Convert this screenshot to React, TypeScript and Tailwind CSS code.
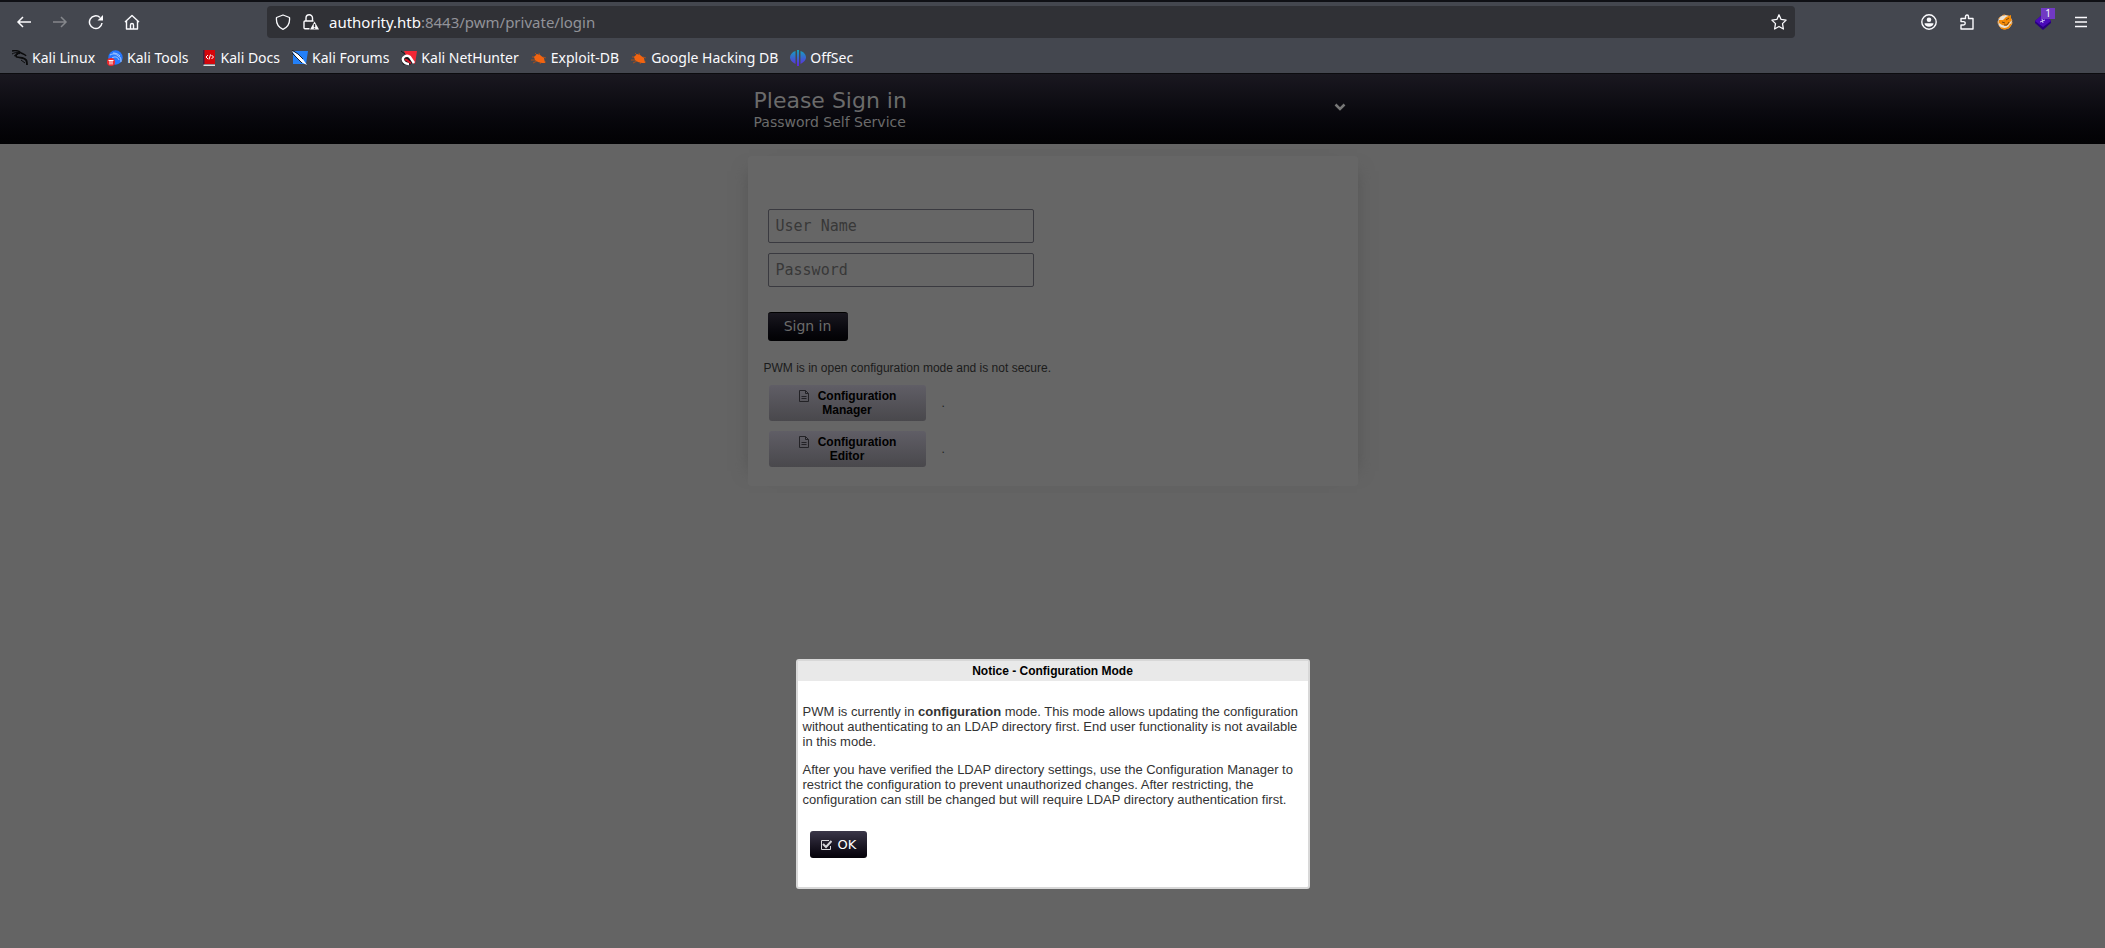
import type { ReactNode } from "react";

type Bookmark = { label: string; icon: ReactNode };

const bug = (
  <svg viewBox="0 0 16 16" className="size-4">
    <path
      d="M1 7h4M0 10h5M2 13l4-2M4 3l3 3M8 3l1 3M12 7l3 1M13 12l2 0M9 14l1-2"
      stroke="#a8501c"
      strokeWidth="1"
    />
    <path d="M3 7l3-3 3 1 4 3 1 5-3 0-4-1-3-2z" fill="#f26411" />
  </svg>
);

const bookmarks: Bookmark[] = [
  {
    label: "Kali Linux",
    icon: (
      <svg viewBox="0 0 16 16" className="size-4" fill="none" stroke="#0b0b0c">
        <path d="M0 1c4-1 7 0 9 2 2 1 4 1 5 3" strokeWidth="1.5" />
        <path d="M8 3c-4 0-5 3-3 4 3 1 7 0 9 3 1 1 1 3 1 5" strokeWidth="1.8" />
        <path d="M0 4c2-1 4-2 7-1M2 6l4-2M9 10l4 3" />
      </svg>
    ),
  },
  {
    label: "Kali Tools",
    icon: (
      <svg viewBox="0 0 16 16" className="size-4">
        <circle cx="8.5" cy="7.5" r="7.2" fill="#2777ff" />
        <path d="M3 5c4-2 6-1 8 1 3 1 3 3 3 6M5 8c3-2 6-1 7 2M6 3c3 0 5 1 7 3" stroke="#a9ccff" fill="none" />
        <circle cx="4" cy="12" r="4" fill="#f0282d" />
        <path d="M1.5 10.5h5M3 10.5v4M5 10.5v4" stroke="#fff" />
      </svg>
    ),
  },
  {
    label: "Kali Docs",
    icon: (
      <svg viewBox="0 0 16 16" className="size-4">
        <path d="M3 0h11v14H3z" fill="#d3060b" />
        <path d="M2 0h1.5v15H2z" fill="#3b2142" />
        <path d="M2.5 14.5h11.500v1.5h-11.500z" fill="#ddd" />
        <path d="M7 5L5 7l2 2M10.5 5l2 2-2 2M9.500 4.500L8 9.500" stroke="#fff" fill="none" />
      </svg>
    ),
  },
  {
    label: "Kali Forums",
    icon: (
      <svg viewBox="0 0 16 16" className="size-4">
        <path d="M1 1h15l-2 13H1z" fill="#2380f8" />
        <path d="M0 1l6 3 4 4 5 7-6-3-4-4z" fill="#fff" />
        <path d="M0 0l6 4 5 5M0 3l5 5 5 5" stroke="#18202c" fill="none" />
      </svg>
    ),
  },
  {
    label: "Kali NetHunter",
    icon: (
      <svg viewBox="0 0 16 16" className="size-4">
        <path d="M3 1h13l-2 13-6-3z" fill="#f32735" />
        <path d="M11 13L7 9c-3-2-5 1-2 4" stroke="#16161a" strokeWidth="6" fill="none" />
        <path d="M13 13L9 7C6 4 1 7 2 10c0 2 3 4 6 4" stroke="#fff" strokeWidth="2.5" fill="none" />
        <path d="M4 10c2-1 3 2 6 3" stroke="#d3182a" strokeWidth="2" fill="none" />
        <path d="M0 1l4 3" stroke="#16161a" />
      </svg>
    ),
  },
  { label: "Exploit-DB", icon: bug },
  { label: "Google Hacking DB", icon: bug },
  {
    label: "OffSec",
    icon: (
      <svg viewBox="0 0 16 16" className="size-4">
        <defs>
          <linearGradient id="offsec" gradientUnits="userSpaceOnUse" x1="0" y1="0" x2="0" y2="16">
            <stop offset="0" stopColor="#12a5bd" />
            <stop offset="1" stopColor="#6323e0" />
          </linearGradient>
        </defs>
        <path
          d="M5.500 1v13C2 12 0 10 0 7.500S2 2 5.500 1zM7 0h2v16H7zM10.500 1C14 2 16 5 16 7.500S14 12 10.500 14z"
          fill="url(#offsec)"
        />
      </svg>
    ),
  },
];

const toolButton = "flex size-9 items-center justify-center";

function BrowserToolbar() {
  return (
    <header className="border-t-2 border-[#0f1015] bg-[#44474f] font-['Noto_Sans',sans-serif] text-[#fbfbfe]">
      <div className="flex h-10 items-center px-1.5">
        <nav className="flex w-[261px]">
          <button aria-label="Back" className={toolButton}>
            <svg viewBox="0 0 16 16" className="size-4" fill="none" stroke="currentColor" strokeWidth="1.5">
              <path d="M15 8H2M7 3L2 8l5 5" />
            </svg>
          </button>
          <button aria-label="Forward" className={`${toolButton} text-[#85878c]`}>
            <svg viewBox="0 0 16 16" className="size-4" fill="none" stroke="currentColor" strokeWidth="1.5">
              <path d="M1 8h13M9 3l5 5-5 5" />
            </svg>
          </button>
          <button aria-label="Reload" className={toolButton}>
            <svg viewBox="0 0 16 16" className="size-4" fill="none" stroke="currentColor" strokeWidth="1.5">
              <path d="M14 9A6.3 6.3 0 1 1 12 3.5" />
              <path d="M15 1v5.500H9.500z" fill="currentColor" stroke="none" />
            </svg>
          </button>
          <button aria-label="Home" className={toolButton}>
            <svg viewBox="0 0 16 16" className="size-4" fill="none" stroke="currentColor" strokeWidth="1.4" strokeLinejoin="round">
              <path d="M1 8l7-6.500L15 8M2.5 7v8h11V7M6.500 15v-4a1.500 1.500 0 0 1 3 0v4" />
            </svg>
          </button>
        </nav>

        <div className="mr-[116px] flex h-8 flex-1 items-center rounded bg-[#303136] px-2">
          <svg viewBox="0 0 16 16" className="size-4" fill="none" stroke="currentColor" strokeWidth="1.3" strokeLinejoin="round">
            <path d="M8 1l6.500 2.500c.5 5-1 9.500-6.500 11.800C2.500 13 1 8.500 1.500 3.500z" />
          </svg>
          <svg viewBox="0 0 16 16" className="ml-3 size-4" fill="none" stroke="currentColor" strokeWidth="1.4">
            <path d="M3 7V4a3 3 0 0 1 6.500 0v3M6.500 14.800H2a1 1 0 0 1-1-1V8a1 1 0 0 1 1-1h8.500" />
            <path d="M11.500 7.500L16 15.500H7z" fill="currentColor" stroke="none" />
            <path d="M11.500 10v3M11.500 13.800v1" stroke="#303136" />
          </svg>
          <a href="#login" className="ml-2.5 flex-1 text-[15px] text-[#929399]">
            <span className="text-[#fbfbfe]">authority.htb</span>:8443/pwm/private/login
          </a>
          <button aria-label="Bookmark this page">
            <svg viewBox="0 0 16 16" className="size-4" fill="none" stroke="currentColor" strokeWidth="1.3" strokeLinejoin="round">
              <path d="M8 .8l2.100 4.600 5 .7-3.600 3.500.9 5.400L8 12.500 3.600 15l.9-5.400L.9 6.100l5-.7z" />
            </svg>
          </button>
        </div>

        <div className="flex gap-0.5">
          <button aria-label="Account" className={toolButton}>
            <svg viewBox="0 0 16 16" className="size-4" fill="none" stroke="currentColor" strokeWidth="1.4">
              <circle cx="8" cy="8" r="7.200" />
              <circle cx="8" cy="5.800" r="2.300" fill="currentColor" stroke="none" />
              <path d="M3.500 9.300h9c0 2.200-2 3.400-4.500 3.400s-4.500-1.200-4.500-3.400z" fill="currentColor" stroke="none" />
            </svg>
          </button>
          <button aria-label="Extensions" className={toolButton}>
            <svg viewBox="0 0 16 16" className="size-4" fill="none" stroke="currentColor" strokeWidth="1.4" strokeLinejoin="round">
              <path d="M2 15v-4h2.500a1.700 1.700 0 0 0 0-3.400H2V4.500h4.500V2.500a1.500 1.500 0 0 1 3 0v2H14V15z" />
            </svg>
          </button>
          <button aria-label="FoxyProxy" className={toolButton}>
            <svg viewBox="0 0 16 16" className="size-4">
              <circle cx="8" cy="8" r="7" fill="#e9e2d6" stroke="#f19a3b" strokeDasharray="3 2" />
              <path d="M2 6l4 0 3-3 5-2 0 6-3 4-2 1-4-1-3-2z" fill="#f58b06" />
              <path d="M4 14c3 1 6 1 8-1l2-3" stroke="#f58b06" strokeWidth="1.5" fill="none" />
              <path d="M5 8l3 1M9 6l3-2M7 11l3 0 2-3" stroke="#7a4610" fill="none" />
            </svg>
          </button>
          <button aria-label="Extension, 1 notification" className={`${toolButton} relative`}>
            <svg viewBox="0 0 16 16" className="size-4">
              <path d="M0 7l8-7 8 7v2l-8 7-8-7z" fill="#2a0080" />
              <path d="M0 7l8-7 8 7-8 6z" fill="#4a0ab8" />
              <path d="M5 8l5-2M7 5l1 4" stroke="#cfc0f5" />
            </svg>
            <span className="absolute top-1 right-1.5 w-3.5 bg-[#7139c3] text-center text-[10px] leading-[11px]">
              1
            </span>
          </button>
          <button aria-label="Open menu" className={toolButton}>
            <svg viewBox="0 0 16 16" className="size-4" stroke="currentColor" strokeWidth="1.3">
              <path d="M2 3.500h12M2 8h12M2 12.500h12" />
            </svg>
          </button>
        </div>
      </div>

      <nav className="flex h-[31px] items-center gap-3 px-3 text-[14px]">
        {bookmarks.map((b) => (
          <a key={b.label} href="#bookmark" className="flex items-center gap-1">
            {b.icon}
            {b.label}
          </a>
        ))}
      </nav>
    </header>
  );
}

function ConfigLink({ label }: { label: string }) {
  return (
    <div className="flex items-center">
      <button className="h-9 w-[157px] rounded-[3px] bg-linear-to-b from-[#605e66] to-[#49484c] px-5 text-[12px] leading-[14px] font-bold text-black">
        <svg viewBox="0 0 12 14" className="mr-2 inline h-3.5 w-3 align-text-top" fill="none" stroke="#232226">
          <path d="M1.5 1.5h6l3 3v8h-9zM7.5 1.5v3h3M3.5 7.5h5M3.5 9.5h5" />
        </svg>
        {label}
      </button>
      <span className="ml-4 text-[12px] leading-4 text-[#1f1f1f]">.</span>
    </div>
  );
}

function LoginPanel() {
  return (
    <main className="mx-auto mt-3 w-[610px] rounded-[3px] bg-[#666] px-4 pt-[53px] pb-[19px] shadow-[14px_0_15px_-15px_#545454,-14px_0_15px_-15px_#545454]">
      <form className="flex flex-col items-start px-1" onSubmit={(e) => e.preventDefault()}>
        <input
          type="text"
          aria-label="User Name"
          placeholder="User Name"
          className="mb-2.5 h-[34px] w-[266px] rounded-[2px] border border-[#3a3a40] px-[7px] font-['DejaVu_Sans_Mono',monospace] text-[15px] placeholder:text-[#383838]"
        />
        <input
          type="password"
          aria-label="Password"
          placeholder="Password"
          className="h-[34px] w-[266px] rounded-[2px] border border-[#3a3a40] px-[7px] font-['DejaVu_Sans_Mono',monospace] text-[15px] placeholder:text-[#383838]"
        />
        <button className="mt-[25px] h-[29px] w-20 rounded-[3px] border-t border-black bg-linear-to-b from-[#1a1820] to-[#020204] pb-0.5 font-['DejaVu_Sans',sans-serif] text-[14px] text-[#6b6b6b]">
          Sign in
        </button>
      </form>
      <p className="mt-[19px] text-[12px] leading-4 text-[#1b1b1b]">
        PWM is in open configuration mode and is not secure.
      </p>
      <div className="mt-[9px] ml-[5px] flex flex-col gap-2.5">
        <ConfigLink label="Configuration Manager" />
        <ConfigLink label="Configuration Editor" />
      </div>
    </main>
  );
}

function NoticeDialog() {
  return (
    <section
      role="dialog"
      aria-labelledby="notice-title"
      className="fixed top-[659px] left-1/2 w-[514px] -translate-x-1/2 rounded-[3px] border-2 border-[#d8d8d8] bg-white text-[13px] leading-[15px] text-[#333]"
    >
      <h2 id="notice-title" className="bg-[#e9e9e9] py-0.5 text-center text-[12px] leading-4 font-bold text-black">
        Notice - Configuration Mode
      </h2>
      <div className="px-[5px] pt-[23px] pb-[29px]">
        <p>
          PWM is currently in <b>configuration</b> mode. This mode allows updating the configuration without
          authenticating to an LDAP directory first. End user functionality is not available in this mode.
        </p>
        <p className="mt-[13px]">
          After you have verified the LDAP directory settings, use the Configuration Manager to restrict the
          configuration to prevent unauthorized changes. After restricting, the configuration can still be changed but
          will require LDAP directory authentication first.
        </p>
        <button className="mt-6 ml-[7px] flex h-[27px] w-[57px] items-center justify-center gap-1.5 rounded-[3px] bg-linear-to-b from-[#3b3749] to-[#050309] font-['DejaVu_Sans',sans-serif] text-white">
          <svg viewBox="0 0 12 12" className="size-3" fill="none" stroke="#d6d6da">
            <path d="M10.5 7v3.500h-9v-9h7.500" />
            <path d="M3 5l3 3L11.500 2" strokeWidth="2" />
          </svg>
          OK
        </button>
      </div>
    </section>
  );
}

export default function App() {
  return (
    <div className="min-h-screen bg-[#646464] font-['Liberation_Sans',sans-serif]">
      <BrowserToolbar />
      <div className="border-t border-[#0c0c0f] bg-linear-to-b from-[#1a1820] to-[#020204] font-['DejaVu_Sans',sans-serif] text-[#6b6b6b]">
        <div className="mx-auto flex h-[70px] w-[610px] items-center justify-between pr-3 pl-1.5">
          <div className="pt-0.5">
            <h1 className="text-[22px] leading-6">Please Sign in</h1>
            <p className="text-[14px] leading-[18px]">Password Self Service</p>
          </div>
          <button aria-label="Toggle header" className="pb-1">
            <svg viewBox="0 0 12 8" className="h-2 w-3" fill="none" stroke="#777" strokeWidth="2.5">
              <path d="M1.5 1.5L6 6l4.500-4.500" />
            </svg>
          </button>
        </div>
      </div>
      <LoginPanel />
      <NoticeDialog />
    </div>
  );
}
